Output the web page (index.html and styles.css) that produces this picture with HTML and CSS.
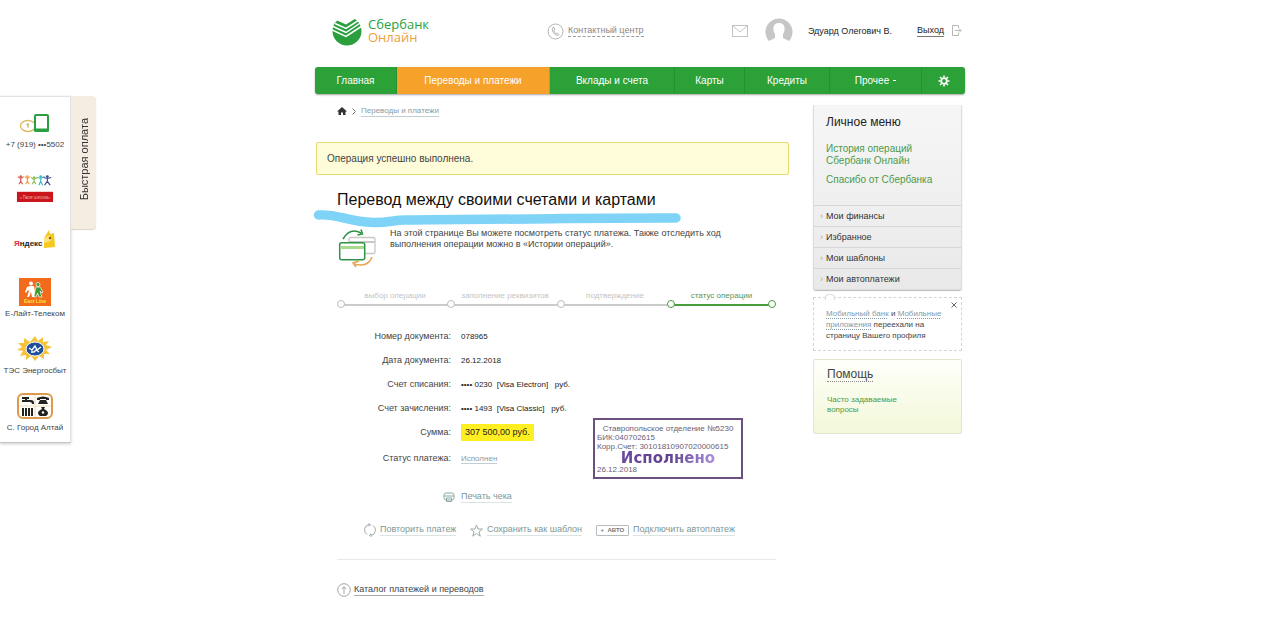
FILE: index.html
```html
<!DOCTYPE html>
<html lang="ru">
<head>
    <meta charset="UTF-8">
    <meta name="viewport" content="width=device-width, initial-scale=1.0">
    <title>Сбербанк Онлайн</title>
    <link rel="stylesheet" href="styles.css">
</head>
<body>
    <aside class="quick">
        <div class="quick-list">
            <a href="#" class="quick-item wide">
                <svg width="38" height="28" viewBox="0 0 38 28" fill="none">
                    <ellipse cx="12" cy="17" rx="7.500" ry="5.500" stroke="#dcb866" stroke-width="1.300"/>
                    <path d="M12 14.500v4M10.500 16l1.500-1.500" stroke="#b98f3b"/>
                    <rect x="19" y="6" width="13" height="16" rx="1" fill="#fff" stroke="#2b9f3e" stroke-width="2"/>
                    <path d="M18 21h15" stroke="#2b9f3e" stroke-width="3"/>
                </svg>
                <span>+7 (919) •••5502</span>
            </a>
            <a href="#" class="quick-item wide" aria-label="Твоя школа">
                <svg width="38" height="28" viewBox="0 0 40 28">
                    <g fill="none" stroke-width="1.200">
                        <path stroke="#d9534f" d="M2 2l3 2 3-2M5 4v3l-2 3M5 7l2 3"/>
                        <path stroke="#f0a040" d="M9 2l3 2 3-2M12 4v3l-2 3M12 7l2 3"/>
                        <path stroke="#8cc152" d="M16 3l3 2 3-2M19 5v2l-2 3M19 7l2 3"/>
                        <path stroke="#3db7c4" d="M22 3l4 1 4-2M26 4v3l-2 4M26 7l2 4"/>
                        <path stroke="#3a4a8c" d="M29 3l4 1 4-1M33 4v3l-3 4M33 7l3 4"/>
                    </g>
                    <circle cx="5" cy="2" r="1.300" fill="#d9534f"/>
                    <circle cx="12" cy="2" r="1.300" fill="#f0a040"/>
                    <circle cx="19" cy="3" r="1.300" fill="#8cc152"/>
                    <circle cx="26" cy="2" r="1.500" fill="#3db7c4"/>
                    <circle cx="33" cy="2" r="1.500" fill="#3a4a8c"/>
                    <rect x="1" y="18" width="38" height="11" fill="#c9151b"/>
                    <text x="20" y="26" class="logo-school">«Твоя школа»</text>
                </svg>
            </a>
            <a href="#" class="quick-item wide" aria-label="Яндекс">
                <svg width="42" height="28" viewBox="0 0 42 28">
                    <text x="0" y="20" class="logo-yandex"><tspan fill="#d8283c">Я</tspan>ндекс</text>
                    <path d="M30 12l5-8 1 4 4-1 1 14-11 1z" fill="#f7c920"/>
                    <path d="M30 12l6-3 1 6-7 2z" fill="#fbe27a"/>
                    <circle cx="36" cy="12" r="1.200" fill="#8a5a10"/>
                </svg>
            </a>
            <a href="#" class="quick-item">
                <svg width="32" height="28" viewBox="0 0 32 28">
                    <rect width="32" height="28" fill="#f26a1b"/>
                    <g fill="#fff"><circle cx="12" cy="5.500" r="2"/><path d="M11 8h4l1 6-1 5h-2l-1-5-2 5H8l2-6-1-1-2 3-1-1 2-5z"/></g>
                    <g fill="#3c9a35" stroke="#fff" stroke-width=".7"><circle cx="19" cy="6.500" r="2"/><path d="M17 9h4l3 5-1 1-2-2 2 6h-3l-1.500-4-1.500 4h-2l1-6z"/></g>
                    <text x="16" y="25" class="logo-elite">East Line</text>
                </svg>
                <span>Е-Лайт-Телеком</span>
            </a>
            <a href="#" class="quick-item">
                <svg width="36" height="28" viewBox="0 0 36 28">
                    <path d="M18 1l3 5 5-4 0 5 6-1-3 4 6 2-6 3 4 4-6 0 0 5-5-3-4 5-4-5-5 4 0-5-6 1 3-5-6-1 5-3-4-4 6 0 0-5 6 4z" fill="#f6c33b"/>
                    <ellipse cx="18" cy="14" rx="9" ry="7" fill="#1e4f9c" stroke="#fff"/>
                    <path d="M12 13l3 2 3-4 2 4 4-3M14 17h3l2-2 3 2" fill="none" stroke="#fff" stroke-width="1.300"/>
                </svg>
                <span>ТЭС Энергосбыт</span>
            </a>
            <a href="#" class="quick-item">
                <svg width="36" height="28" viewBox="0 0 36 28">
                    <rect x="1" y="2" width="34" height="24" rx="5" fill="#fffdf6" stroke="#dd9a4e" stroke-width="2"/>
                    <path d="M18 3v22M2 14h32" stroke="#eadbc4"/>
                    <g fill="#222">
                        <path d="M5 5h7v2h-2v1h4q3 0 3 3v1h-2q0-2-2-2H5V8h3V7H5z"/>
                        <path d="M20 6q6-3 12 0v2h-3V7h-6v1h-3zM23 8h6l2 4H21z"/>
                        <path d="M5 16h2v8H5zM8 16h2v8H8zM11 16h2v8h-2zM14 16h2v8h-2z"/>
                        <path d="M24 15h4l-1 2q4 2 4 4t-2 3h-6q-2-1-2-3t4-4z"/>
                    </g>
                    <circle cx="26" cy="20.500" r="1.200" fill="#fff"/>
                </svg>
                <span>С. Город Алтай</span>
            </a>
        </div>
        <button class="quick-tab" type="button"><span>Быстрая оплата</span></button>
    </aside>

    <div class="page">
        <header class="header">
            <a href="#" class="logo">
                <svg width="30" height="29" viewBox="0 0 30 29">
                    <circle cx="15" cy="14" r="14.500" fill="#2b9f3e"/>
                    <path d="M0 0h26L14 7.500 5 3.500 0 8z" fill="#fff"/>
                    <path d="M3 6.500L14 11.500 28 2.500M1 9.500l13 6 15-10M0 13l14 6.500L30 9" fill="none" stroke="#fff" stroke-width="1.500"/>
                </svg>
                <span class="logo-text">Сбербанк<br><em>Онлайн</em></span>
            </a>
            <a href="#" class="contact">
                <svg width="17" height="17" viewBox="0 0 17 17" fill="none" stroke="#b5b5b5">
                    <circle cx="8.500" cy="8.500" r="7.500"/>
                    <path d="M6 4.500Q4.500 6 6 9t5 3.500l1-1-1.800-1.500-1 .8Q7.500 9.500 6.800 7.500l1-.8L7 4.500z"/>
                </svg>
                <span>Контактный центр</span>
            </a>
            <div class="user">
                <a href="#" class="mail" aria-label="Почта">
                    <svg width="16" height="12" viewBox="0 0 16 12" fill="none" stroke="#c4c4c4">
                        <rect x=".5" y=".5" width="15" height="11"/>
                        <path d="M1 1l7 6 7-6"/>
                    </svg>
                </a>
                <svg class="avatar" width="28" height="26" viewBox="0 0 28 26">
                    <path d="M4 23A13.500 13.500 0 1 1 24 23L18 20V16Q20 13 19.500 9.500 19 5 14 5T8.500 9.500Q8 13 10 16V20z" fill="#c6c6c6"/>
                </svg>
                <span class="name">Эдуард Олегович В.</span>
                <a href="#" class="exit">Выход</a>
                <svg width="10" height="12" viewBox="0 0 10 12" fill="none" stroke="#b8b8b8">
                    <path d="M6.500 3V.5h-6v10h6V8"/>
                    <path d="M3 5.500h6M7 3.500l2 2-2 2"/>
                </svg>
            </div>
        </header>

        <nav class="nav">
            <a href="#">Главная</a>
            <a href="#" class="active">Переводы и платежи</a>
            <a href="#">Вклады и счета</a>
            <a href="#">Карты</a>
            <a href="#">Кредиты</a>
            <a href="#">Прочее <i class="caret"></i></a>
            <a href="#" aria-label="Настройки">
                <svg width="12" height="12" viewBox="0 0 12 12" fill="none" stroke="#fff">
                    <circle cx="6" cy="6" r="2.800" stroke-width="1.800"/>
                    <path d="M6 .5v2M6 9.500v2M.5 6h2M9.500 6h2M2 2l1.500 1.500M8.500 8.500L10 10M2 10l1.500-1.500M8.500 3.500L10 2" stroke-width="1.500"/>
                </svg>
            </a>
        </nav>

        <div class="columns">
            <main class="main">
                <div class="crumbs">
                    <a href="#" aria-label="На главную">
                        <svg width="10" height="8" viewBox="0 0 10 8"><path d="M5 0L0 4.500h1.500V8H4V5.500h2V8h2.500V4.500H10z" fill="#333"/></svg>
                    </a>
                    <svg width="4" height="7" viewBox="0 0 4 7"><path d="M.5.500l3 3-3 3" fill="none" stroke="#777"/></svg>
                    <a href="#" class="crumb">Переводы и платежи</a>
                </div>

                <div class="message">Операция успешно выполнена.</div>

                <div class="content">
                    <div class="title">
                        <h1>Перевод между своими счетами и картами</h1>
                        <svg class="marker" width="370" height="20" viewBox="0 0 370 20">
                            <path d="M5.500 6C25 4.500 35 13 60 13.500 75 14 80 11 92 11 150 10 200 10.500 250 9.500 300 9 330 9 363 9" fill="none" stroke="#7fd3f7" stroke-width="9.500" stroke-linecap="round"/>
                        </svg>
                    </div>

                    <div class="intro">
                        <svg width="40" height="40" viewBox="0 0 40 40" fill="none">
                            <rect x="12" y="9.500" width="26" height="16" rx="2" stroke="#c8c8c8" stroke-width="1.300"/>
                            <path d="M12 14h26" stroke="#c8c8c8" stroke-width="2"/>
                            <rect x="2.700" y="14.700" width="25" height="17" rx="2" fill="#fff" stroke="#2f9344" stroke-width="1.500"/>
                            <path d="M3.500 19.500h23.500" stroke="#a9d98c" stroke-width="3"/>
                            <path d="M6 11Q13-1 24 5M20.500 7l5-1L24 1.500" stroke="#2f9344" stroke-width="1.500"/>
                            <path d="M35 29Q31 40 17 36M22 33l-6 2 3 4" stroke="#e8a552" stroke-width="1.500"/>
                        </svg>
                        <p>На этой странице Вы можете посмотреть статус платежа. Также отследить ход выполнения операции можно в «Истории операций».</p>
                    </div>

                    <ol class="steps">
                        <li>выбор операции</li>
                        <li>заполнение реквизитов</li>
                        <li>подтверждение</li>
                        <li class="current">статус операции</li>
                    </ol>

                    <div class="payment">
                        <dl class="details">
                            <div><dt>Номер документа:</dt><dd>078965</dd></div>
                            <div><dt>Дата документа:</dt><dd>26.12.2018</dd></div>
                            <div><dt>Счет списания:</dt><dd>•••• 0230 &nbsp;[Visa Electron] &nbsp; руб.</dd></div>
                            <div><dt>Счет зачисления:</dt><dd>•••• 1493 &nbsp;[Visa Classic] &nbsp; руб.</dd></div>
                            <div><dt>Сумма:</dt><dd><strong class="sum">307 500,00 руб.</strong></dd></div>
                            <div><dt>Статус платежа:</dt><dd><a href="#" class="status">Исполнен</a></dd></div>
                        </dl>
                        <div class="stamp">
                            <p class="branch">Ставропольское отделение №5230</p>
                            <p>БИК:040702615</p>
                            <p>Корр.Счет: 30101810907020000615</p>
                            <p class="done">Исполнено</p>
                            <p>26.12.2018</p>
                        </div>
                    </div>

                    <div class="print">
                        <a href="#" class="action">
                            <svg width="12" height="12" viewBox="0 0 12 12" fill="none" stroke="#8fa9a9">
                                <rect x="1" y="2" width="10" height="7" rx="2"/>
                                <path d="M1 5h10M3.500 7v3.500h5V7z"/>
                            </svg>
                            <span>Печать чека</span>
                        </a>
                    </div>

                    <div class="actions">
                        <a href="#" class="action">
                            <svg width="12" height="14" viewBox="0 0 12 14" fill="none" stroke="#a0adad">
                                <path d="M5 1.500A5.500 5.500 0 0 0 3 11.500M7 12.500A5.500 5.500 0 0 0 9 2.500M5 0v3L7 1.500M7 14v-3L5 12.500"/>
                            </svg>
                            <span>Повторить платеж</span>
                        </a>
                        <a href="#" class="action">
                            <svg width="13" height="13" viewBox="0 0 13 13" fill="none" stroke="#a0adad">
                                <path d="M6.500 1l1.500 4h4.500L9 7.800l1.300 4.400-3.800-2.700-3.800 2.700L4 7.800.5 5H5z"/>
                            </svg>
                            <span>Сохранить как шаблон</span>
                        </a>
                        <a href="#" class="action">
                            <b class="auto">+ &nbsp;АВТО</b>
                            <span>Подключить автоплатеж</span>
                        </a>
                    </div>

                    <div class="catalog">
                        <a href="#">
                            <svg width="14" height="14" viewBox="0 0 14 14" fill="none" stroke="#a5a5a5">
                                <circle cx="7" cy="7" r="6.300"/>
                                <path d="M7 11V4M4.800 6L7 3.800 9.200 6"/>
                            </svg>
                            <span>Каталог платежей и переводов</span>
                        </a>
                    </div>
                </div>
            </main>

            <aside class="sidebar">
                <section class="menu">
                    <h2>Личное меню</h2>
                    <p><a href="#">История операций<br>Сбербанк Онлайн</a></p>
                    <p><a href="#">Спасибо от Сбербанка</a></p>
                    <ul>
                        <li><a href="#">Мои финансы</a></li>
                        <li><a href="#">Избранное</a></li>
                        <li><a href="#">Мои шаблоны</a></li>
                        <li><a href="#">Мои автоплатежи</a></li>
                    </ul>
                </section>
                <section class="notice">
                    <button type="button" class="close" aria-label="Закрыть">
                        <svg width="6" height="6" viewBox="0 0 6 6"><path d="M.5.500l5 5M5.500.500l-5 5" stroke="#666"/></svg>
                    </button>
                    <p><a href="#">Мобильный банк</a> и <a href="#">Мобильные приложения</a> переехали на страницу Вашего профиля</p>
                </section>
                <section class="help">
                    <h2><a href="#">Помощь</a></h2>
                    <p><a href="#">Часто задаваемые вопросы</a></p>
                </section>
            </aside>
        </div>
    </div>
</body>
</html>
```

FILE: styles.css
```css
* {
    box-sizing: border-box;
}

body {
    margin: 0;
    display: grid;
    grid-template-columns: minmax(96px, 1fr) minmax(0, 650px) 1fr;
    align-items: start;
    background: #fff;
    color: #444;
    font-family: "Liberation Sans", Arial, sans-serif;
    font-size: 9px;
    line-height: 11px;
}

h1, h2, p, ul, ol, dl, dd {
    margin: 0;
    padding: 0;
}

ul, ol {
    list-style: none;
}

a {
    color: inherit;
    text-decoration: none;
}

svg {
    display: block;
    flex: none;
}

button {
    font-family: inherit;
    border: none;
    padding: 0;
    cursor: pointer;
}

/* quick payment panel */
.quick {
    display: flex;
    align-items: flex-start;
    margin-top: 96px;
}

.quick-list {
    width: 71px;
    padding: 12px 0 9px;
    border: 1px solid #e3e3e3;
    border-left: none;
    border-bottom-color: #c4c4c4;
    box-shadow: 0 1px 3px rgba(0, 0, 0, 0.2);
    font-size: 8px;
    text-align: center;
}

.quick-item {
    display: flex;
    flex-direction: column;
    align-items: center;
    gap: 2px;
    margin-bottom: 16px;
    white-space: nowrap;
}

.quick-item.wide {
    margin-bottom: 24px;
}

.quick-item:last-child {
    margin-bottom: 0;
}

.quick-tab {
    display: flex;
    align-items: center;
    justify-content: center;
    width: 25px;
    height: 133px;
    padding-bottom: 6px;
    background: #f5ede2;
    border-radius: 0 4px 4px 0;
    box-shadow: 0 1px 1px #ddd3c6;
    color: #333;
    font-size: 11px;
}

.quick-tab span {
    writing-mode: vertical-rl;
    transform: rotate(180deg);
}

.logo-school {
    fill: #f3b0a8;
    font-size: 5px;
    font-style: italic;
    text-anchor: middle;
}

.logo-yandex {
    fill: #222;
    font-size: 8px;
    font-weight: bold;
}

.logo-elite {
    fill: #ffe23b;
    font-size: 5px;
    font-weight: bold;
    text-anchor: middle;
}

/* header */
.header {
    display: flex;
    align-items: center;
    height: 67px;
    padding: 0 3px 5px 17px;
}

.logo {
    display: flex;
    align-items: center;
    gap: 6px;
    width: 215px;
}

.logo-text {
    color: #2b9f3e;
    font-family: "Open Sans", sans-serif;
    font-size: 13px;
    line-height: 13px;
}

.logo-text em {
    color: #eda03a;
    font-style: normal;
}

.contact {
    display: flex;
    align-items: center;
    gap: 4px;
    color: #888;
}

.contact span {
    border-bottom: 1px dashed #999;
}

.user {
    display: flex;
    align-items: center;
    margin-left: auto;
    color: #222;
}

.mail {
    margin-right: 17px;
}

.name {
    margin: 0 25px 0 15px;
}

.exit {
    margin-right: 8px;
    border-bottom: 1px solid #777;
}

/* main navigation */
.nav {
    display: grid;
    grid-template-columns: 82fr 153fr 125fr 70fr 85fr 92fr 43fr;
    height: 27px;
    background: #2ba138;
    border-radius: 3px;
    box-shadow: 0 1px 2px rgba(0, 0, 0, 0.35);
    color: #fff;
    font-size: 10px;
    overflow: hidden;
}

.nav a {
    display: flex;
    align-items: center;
    justify-content: center;
    gap: 4px;
    border-right: 1px solid #25912f;
}

.nav a:last-child {
    border-right: none;
}

.nav .active {
    background: #f6a12a;
    border-right-color: #e08e1c;
}

.caret {
    width: 3px;
    height: 1px;
    background: #fff;
}

.columns {
    display: grid;
    grid-template-columns: minmax(0, 1fr) 149px;
    gap: 24px;
    padding: 11px 3px 0 1px;
}

/* breadcrumbs and message */
.crumbs {
    display: flex;
    align-items: center;
    gap: 5px;
    padding-left: 21px;
    font-size: 8px;
}

.crumb {
    color: #8a9ba5;
    border-bottom: 1px solid #c3ced4;
}

.message {
    margin-top: 25px;
    padding: 10px;
    background: #fffcd9;
    border: 1px solid #e6dc6e;
    border-radius: 2px;
    font-size: 10px;
}

/* content */
.content {
    padding: 15px 13px 0 21px;
}

.title {
    position: relative;
}

h1 {
    color: #111;
    font-size: 16px;
    font-weight: normal;
    line-height: 20px;
}

/* hand drawn highlight under the title */
.marker {
    position: absolute;
    left: -24px;
    top: 19px;
}

.intro {
    display: flex;
    gap: 13px;
    margin-top: 18px;
    padding-right: 32px;
}

.steps {
    display: grid;
    grid-template-columns: 110fr 110fr 110fr 103fr;
    margin: 22px 3px 0;
    color: #c4c4c4;
    font-size: 8px;
    text-align: center;
}

.steps li {
    position: relative;
    height: 16px;
    border-bottom: 2px solid #cbcbcb;
}

.steps li::before,
.steps .current::after {
    content: "";
    position: absolute;
    left: -3px;
    bottom: -4px;
    width: 6px;
    height: 6px;
    background: #fff;
    border: 1px solid #bbb;
    border-radius: 50%;
}

.steps .current {
    color: #57955b;
    border-color: #4a9f3c;
}

.steps .current::before,
.steps .current::after {
    border-color: #4a9f3c;
}

.steps .current::after {
    left: auto;
    right: -3px;
}

.payment {
    display: flex;
    justify-content: space-between;
    align-items: flex-end;
    margin-top: 18px;
    padding-right: 33px;
}

.details {
    padding-bottom: 7px;
    font-size: 8px;
}

.details div {
    display: flex;
    align-items: center;
    gap: 10px;
    height: 24px;
}

.details div:last-child {
    height: 28px;
}

.details dt {
    width: 114px;
    font-size: 9px;
    text-align: right;
}

.details dd {
    color: #222;
}

.sum {
    display: block;
    padding: 3px 4px;
    background: #ffee22;
    font-size: 9px;
    font-weight: normal;
}

.status {
    color: #8a9ba5;
    border-bottom: 1px solid #c3ced4;
}

.stamp {
    width: 150px;
    padding: 4px 2px 3px;
    border: 2px solid #6d5080;
    color: #6b6177;
    font-size: 8px;
    line-height: 9px;
    white-space: nowrap;
}

.stamp .branch {
    text-align: center;
}

.stamp .done {
    width: max-content;
    margin: 0 auto;
    background: linear-gradient(to right, #6a4a9c, #5f4091 50%, #a88fe0);
    background-clip: text;
    color: transparent;
    font-family: "DejaVu Sans", sans-serif;
    font-size: 15px;
    font-weight: bold;
    line-height: 14px;
}

.action {
    display: flex;
    align-items: center;
    gap: 4px;
    color: #7d9796;
}

.action span {
    border-bottom: 1px solid #dbe3e3;
}

.print {
    display: flex;
    margin-top: 12px;
    padding-left: 106px;
}

.print .action {
    gap: 6px;
}

.actions {
    display: flex;
    justify-content: space-between;
    margin-top: 20px;
    padding: 0 41px 22px 27px;
}

.auto {
    padding: 0 4px;
    border: 1px solid #b5bcbc;
    border-radius: 1px;
    color: #777;
    font-size: 6px;
    line-height: 9px;
}

.catalog {
    display: flex;
    padding-top: 23px;
    border-top: 1px solid #e8e8e8;
}

.catalog a {
    display: flex;
    align-items: center;
    gap: 3px;
}

.catalog span {
    border-bottom: 1px solid #aaa;
}

/* right column */
.sidebar h2 {
    font-size: 12px;
    font-weight: normal;
    line-height: 14px;
}

.menu {
    background: linear-gradient(#f6f6f6, #e9e9e9);
    border: 1px solid #ddd;
    border-top-color: #f3f3f3;
    border-radius: 0 0 3px 3px;
    box-shadow: 0 1px 1px #bbb;
}

.menu h2 {
    padding: 9px 12px 14px;
    color: #222;
}

.menu p {
    padding: 0 12px 7px;
    color: #4d9a4a;
    font-size: 10px;
    line-height: 12px;
}

.menu ul {
    margin-top: 12px;
}

.menu li {
    border-top: 1px solid #d6d6d6;
}

.menu li a {
    display: flex;
    align-items: center;
    height: 20px;
    padding-left: 6px;
    color: #333;
}

.menu li a::before {
    content: "›";
    width: 6px;
    color: #aaa;
}

.notice {
    position: relative;
    margin-top: 7px;
    padding: 10px 14px 9px 12px;
    border: 1px dashed #d4d4d4;
    font-size: 8px;
}

/* small tab on the top edge */
.notice::before {
    content: "";
    position: absolute;
    top: -4px;
    left: 11px;
    width: 8px;
    height: 5px;
    background: #fff;
    border: 1px solid #ddd;
    border-bottom: none;
    border-radius: 4px 4px 0 0;
}

.notice a {
    color: #8499a8;
    text-decoration: underline dotted;
    text-underline-offset: 2px;
}

.close {
    position: absolute;
    top: 4px;
    right: 4px;
    background: none;
}

.help {
    margin-top: 8px;
    padding: 7px 13px 18px;
    background: linear-gradient(#fffffa, #f2f8d8);
    border: 1px solid #e3e6cf;
    border-radius: 2px;
}

.help h2 a {
    border-bottom: 1px dotted #888;
}

.help p {
    margin-top: 14px;
    padding-right: 40px;
    color: #4d9a4a;
    font-size: 8px;
    line-height: 10px;
}
```
